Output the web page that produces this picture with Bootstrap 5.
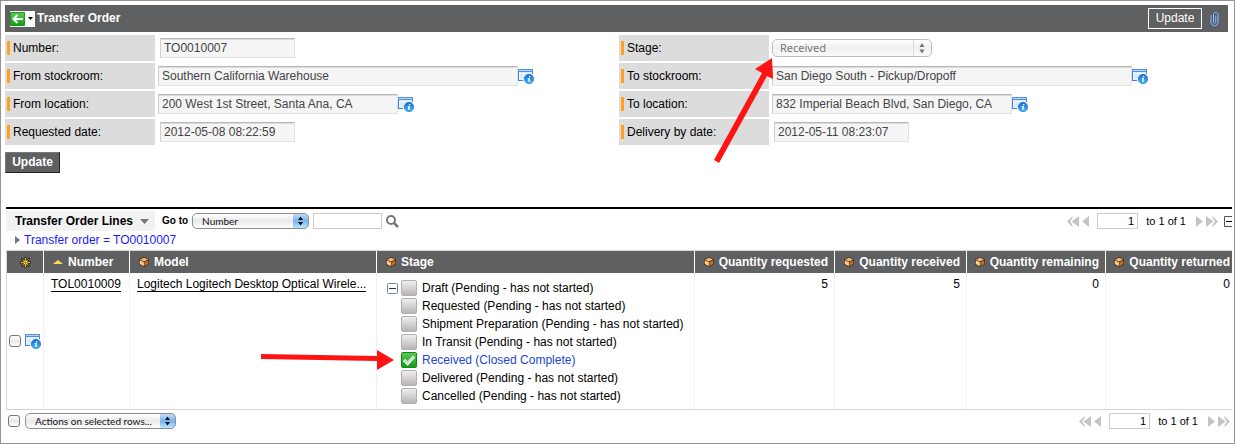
<!DOCTYPE html>
<html lang="en">
<head>
<meta charset="utf-8">
<meta name="viewport" content="width=device-width, initial-scale=1">
<title>Transfer Order</title>
<link href="https://cdn.jsdelivr.net/npm/bootstrap@5.3.0/dist/css/bootstrap.min.css" rel="stylesheet">
<style>
  body { font-family: "Liberation Sans", Arial, sans-serif; font-size: 12px; line-height: 16px; color: #000; background: #fff; }
  svg { display: block; flex: none; }
  input, select, button { font: inherit; border-radius: 0; }
  .page-frame { min-height: 100vh; border: 1px solid #949494; overflow: hidden; }
  .record { padding: 4px 6px 0 4px; }
  .title-bar { background: #5f6062; color: #fff; height: 27px; padding: 0 9px 0 5px; }
  .title-bar h1 { font-size: 12px; line-height: 16px; font-weight: bold; margin: 0 0 2px 2px; }
  .back-btn { background: #fff; border: 0; padding: 0; gap: 2px; height: 16px; width: 25px; }
  .outline-btn { background: transparent; color: #fff; border: 1px solid #fff; height: 21px; width: 54px; padding: 0 0 2px; }
  .solid-btn { background: #5f6062; color: #fff; font-weight: bold; border: 1px solid #77787a; border-right-color: #222; border-bottom-color: #222; width: 55px; height: 21px; padding: 0 0 1px; margin-top: 5px; }
  .fields { padding-top: 3px; }
  .field-columns { gap: 5px; }
  .field-row { height: 26px; margin-bottom: 2px; }
  .field-label { flex: 0 0 150px; height: 26px; background: #dcdcdc; padding-left: 2px; gap: 3px; }
  .field-label::before { content: ""; width: 3px; height: 14px; background: #ffa11f; }
  .text-field { height: 20px; margin-left: 3px; padding: 0 4px 0 3px; color: #444; background: #f5f5f5; border: 1px solid #e3e3e3; border-top: 1px solid #b8b8b8; border-left-color: #cfcfcf; box-shadow: inset 0 1px 0 #dcdcdc; min-width: 0; }
  .w-long { width: 360px; }
  .w-mid { width: 240px; }
  .w-short { width: 135px; margin-left: 5px; }
  .mac-select { appearance: none; border: 1px solid #8c8c8c; border-radius: 5px; font-family: Lato, sans-serif; font-size: 10px; line-height: 12px; color: #111; height: 16px; padding: 0 16px 1px 9px;
    background: url("data:image/svg+xml,%3Csvg xmlns='http://www.w3.org/2000/svg' width='15' height='14'%3E%3ClinearGradient id='g' x2='0' y2='1'%3E%3Cstop stop-color='%23c4dcf6'/%3E%3Cstop offset='.5' stop-color='%2377b3ee'/%3E%3Cstop offset='1' stop-color='%23bfe6ff'/%3E%3C/linearGradient%3E%3Cpath fill='url(%23g)' d='M0 0h15v14H0z'/%3E%3Cpath d='M5 6l2.500-3.500L10 6zM5 8l2.500 3.500L10 8z' fill='%23111'/%3E%3C/svg%3E") right center no-repeat, linear-gradient(#fff, #e9e9e9 50%, #fff); }
  .mac-select:disabled { opacity: 1; border-color: #bdbdbd; color: #777; font-family: "Noto Sans", sans-serif; font-size: 11px; line-height: 14px; height: 18px; width: 160px; padding: 0 18px 1px 7px;
    background: url("data:image/svg+xml,%3Csvg xmlns='http://www.w3.org/2000/svg' width='18' height='16'%3E%3Cpath d='M.5 0v16' stroke='%23ddd'/%3E%3Cpath d='M6.500 7L9 3l2.500 4zM6.500 9.500L9 13.500l2.500-4z' fill='%23777'/%3E%3C/svg%3E") right center no-repeat, linear-gradient(#fff, #f0f0f0 50%, #fbfbfb); }
  .select-wrap { position: relative; margin-left: 3px; }
  .pointer-arrow { position: absolute; pointer-events: none; z-index: 2; }
  .stage-pointer { right: 156px; top: 16px; }
  .item-pointer { right: calc(100% + 7px); top: -1px; }
  .related { margin: 34px 2px 0 5px; border-top: 2px solid #000; overflow: hidden; }
  .list-bar { height: 24px; padding-top: 2px; }
  .list-title { flex: 0 0 149px; height: 20px; background: #f2f2f2; border: 0; font-weight: bold; padding: 0 6px 0 9px; white-space: nowrap; color: #000; }
  .list-tools { height: 20px; }
  .goto-label { font-size: 10px; font-weight: bold; margin: 0 4px 0 7px; }
  .goto-select { width: 117px; }
  .plain-field { border: 1px solid #ccc; background: #fff; height: 16px; padding: 0 3px; font-size: 11px; line-height: 14px; min-width: 0; }
  .search-field { width: 69px; margin: 0 4px; }
  .page-field { width: 41px; text-align: right; margin: 0 8px; }
  .icon-btn { background: none; border: 0; padding: 0; }
  .pager { font-size: 11px; line-height: 14px; white-space: nowrap; }
  .page-step { margin-left: 3px; }
  .pager-end { margin-left: 10px; }
  .pager-fold { margin: 0 -3px 0 6px; }
  .crumb { color: #1a1aff; text-decoration: none; gap: 3px; padding-left: 9px; height: 16px; margin-bottom: 2px; margin-top: -1px; }
  .lines { width: 100%; table-layout: fixed; border-collapse: separate; border-spacing: 0; border: solid #d5d5d5; border-width: 1px 0 1px 1px; margin: 0; }
  .lines th { height: 22px; padding: 0 6px; background: #5f6062; color: #fff; font-weight: bold; border-right: 1px solid #fff; white-space: nowrap; vertical-align: middle; }
  .lines td { padding: 3px 6px 0 7px; border-right: 1px solid #f0f0f0; vertical-align: top; white-space: nowrap; }
  .lines th:last-child, .lines td:last-child { border-right: 0; padding-right: 2px; }
  .lines td a { color: #000; text-decoration: none; border-bottom: 1px solid #000; display: inline-block; line-height: 14px; }
  .lines .pick-cell { vertical-align: middle; padding: 0 0 0 2px; }
  .head-item { gap: 5px; }
  .head-item.lead-item { padding-left: 3px; }
  .stages { list-style: none; margin: 0; padding: 3px 0 4px 17px; }
  .stages li { position: relative; height: 18px; gap: 5px; }
  .fold-btn { position: absolute; left: -14px; top: 4px; }
  .state-box { width: 16px; height: 16px; border: 1px solid #b0b0b0; border-radius: 2px; background: linear-gradient(#efefef, #b9b5b5); flex: none; }
  .done { color: #2146d0; }
  .tick { appearance: none; width: 12px; height: 12px; margin: 0; border: 1px solid #777; border-radius: 3px; background: linear-gradient(#fff, #e8e8e8 50%, #fff); flex: none; }
  .foot-bar { padding: 3px 2px 0 2px; height: 19px; }
  .action-select { width: 151px; margin-left: 5px; }
</style>
</head>
<body>
<svg width="0" height="0" class="position-absolute" aria-hidden="true">
  <defs>
    <linearGradient id="blueBall" x2="0" y2="1"><stop stop-color="#1769d2"/><stop offset="1" stop-color="#35c0ff"/></linearGradient>
    <linearGradient id="greenTile" x2="0" y2="1"><stop stop-color="#5cc95a"/><stop offset="1" stop-color="#149c14"/></linearGradient>
    <symbol id="info" viewBox="0 0 16 16">
      <path d="M.5 2.500h14v10H.5z" fill="#f2f8ff"/><path d="M2 6h11v5H2z" fill="#d9ecfb"/>
      <path d="M.5 13V2M14.500 2v4M0 12.500H5" fill="none" stroke="#3b7fe0"/>
      <path d="M0 1h15v4H0z" fill="#5590dc"/><path d="M1 2h13v1H1z" fill="#b5d4fa"/><path d="M1 4h13v1H1z" fill="#dcecff"/>
      <circle cx="11" cy="11" r="4.700" fill="url(#blueBall)" stroke="#1b62c4" stroke-width=".6"/>
      <path d="M10.900 8h1.400v1.300h-1.400zM9.700 10h2.300l-.4 2.700h.8v.8H9.900l.5-2.700h-.8z" fill="#fff"/>
    </symbol>
    <symbol id="crate" viewBox="0 0 10 10">
      <path d="M0 2.500L5 0l5 2.200v5L5 10 0 7.500z" fill="#4a2508"/>
      <path d="M1 2.700L5 .7l4 1.800-4 2z" fill="#f0bd80"/><path d="M.7 3.300L4.900 5.200v4L.7 7.100z" fill="#fdcb92"/><path d="M5.400 5.200L9.300 3.200v3.700L5.400 9z" fill="#b8712f"/>
    </symbol>
    <symbol id="prev2" viewBox="0 0 12 11"><path d="M5.500 0L0 5.500 5.500 11V9L3 5.500 5.500 2zM12 0L4.500 5.500 12 11z" fill="#c4c4c4"/></symbol>
    <symbol id="next2" viewBox="0 0 12 11"><path d="M6.500 0L12 5.500 6.500 11V9L9 5.500 6.500 2zM0 0l7.500 5.500L0 11z" fill="#c4c4c4"/></symbol>
    <symbol id="prev1" viewBox="0 0 7 11"><path d="M7 0L0 5.500 7 11z" fill="#c4c4c4"/></symbol>
    <symbol id="next1" viewBox="0 0 7 11"><path d="M0 0l7 5.500L0 11z" fill="#c4c4c4"/></symbol>
  </defs>
</svg>

<main class="page-frame">
  <section class="record">
    <header class="title-bar d-flex align-items-center">
      <button class="back-btn d-flex align-items-center" type="button" aria-label="Back">
        <svg width="16" height="16" viewBox="0 0 16 16"><path d="M.5 1.500h14v13H.5z" fill="url(#greenTile)" stroke="#159b15"/><path d="M13 8H4M7.500 4L3.500 8l4 4" fill="none" stroke="#fff" stroke-width="2"/></svg>
        <svg width="5" height="3" viewBox="0 0 5 3"><path d="M0 0h5L2.500 3z" fill="#000"/></svg>
      </button>
      <h1>Transfer Order</h1>
      <button class="outline-btn ms-auto me-2" type="button">Update</button>
      <button class="icon-btn" type="button" aria-label="Attachments">
        <svg width="9" height="16" viewBox="0 0 9 16"><path d="M1 4v7.500c0 4.500 7 4.500 7 0V3.500c0-3-4.500-3-4.500 0V11c0 2 2.300 2 2.300 0V4.500" fill="none" stroke="#36538a" stroke-width="1.700"/><path d="M1 4v7.500c0 4.500 7 4.500 7 0V3.500c0-3-4.500-3-4.500 0V11c0 2 2.300 2 2.300 0V4.500" fill="none" stroke="#b4d0f6" stroke-width=".9"/></svg>
      </button>
    </header>

    <form class="fields">
      <div class="field-columns d-flex">
        <div class="w-50">
          <div class="field-row d-flex align-items-center"><label class="field-label d-flex align-items-center" for="number">Number:</label><input class="text-field w-short" id="number" value="TO0010007" readonly></div>
          <div class="field-row d-flex align-items-center"><label class="field-label d-flex align-items-center" for="fromStock">From stockroom:</label><input class="text-field w-long" id="fromStock" value="Southern California Warehouse" readonly><button class="icon-btn" type="button" aria-label="Stockroom details"><svg width="16" height="16"><use href="#info"/></svg></button></div>
          <div class="field-row d-flex align-items-center"><label class="field-label d-flex align-items-center" for="fromLoc">From location:</label><input class="text-field w-mid" id="fromLoc" value="200 West 1st Street, Santa Ana, CA" readonly><button class="icon-btn" type="button" aria-label="Location details"><svg width="16" height="16"><use href="#info"/></svg></button></div>
          <div class="field-row d-flex align-items-center"><label class="field-label d-flex align-items-center" for="reqDate">Requested date:</label><input class="text-field w-short" id="reqDate" value="2012-05-08 08:22:59" readonly></div>
        </div>
        <div class="w-50">
          <div class="field-row d-flex align-items-center"><label class="field-label d-flex align-items-center" for="stage">Stage:</label>
            <div class="select-wrap d-flex">
              <select class="mac-select" id="stage" disabled><option>Received</option></select>
              <svg class="pointer-arrow stage-pointer" width="62" height="110" viewBox="0 0 62 110"><path d="M58 3L41 14l7 4L0 105l5 3L53 21l6 3z" fill="#ff1414"/></svg>
            </div>
          </div>
          <div class="field-row d-flex align-items-center"><label class="field-label d-flex align-items-center" for="toStock">To stockroom:</label><input class="text-field w-long" id="toStock" value="San Diego South - Pickup/Dropoff" readonly><button class="icon-btn" type="button" aria-label="Stockroom details"><svg width="16" height="16"><use href="#info"/></svg></button></div>
          <div class="field-row d-flex align-items-center"><label class="field-label d-flex align-items-center" for="toLoc">To location:</label><input class="text-field w-mid" id="toLoc" value="832 Imperial Beach Blvd, San Diego, CA" readonly><button class="icon-btn" type="button" aria-label="Location details"><svg width="16" height="16"><use href="#info"/></svg></button></div>
          <div class="field-row d-flex align-items-center"><label class="field-label d-flex align-items-center" for="delDate">Delivery by date:</label><input class="text-field w-short" id="delDate" value="2012-05-11 08:23:07" readonly></div>
        </div>
      </div>
      <button class="solid-btn d-block" type="button">Update</button>
    </form>
  </section>

  <section class="related">
    <div class="list-bar d-flex align-items-start">
      <button class="list-title d-flex align-items-center justify-content-between" type="button">Transfer Order Lines<svg width="9" height="5" viewBox="0 0 9 5"><path d="M0 0h9L4.500 5z" fill="#777"/></svg></button>
      <div class="list-tools d-flex align-items-center flex-fill">
        <label class="goto-label" for="goto">Go to</label>
        <select class="mac-select goto-select" id="goto"><option>Number</option></select>
        <input class="plain-field search-field" type="text" aria-label="Search text">
        <button class="icon-btn" type="button" aria-label="Search"><svg width="13" height="13" viewBox="0 0 13 13"><circle cx="5" cy="5" r="4" fill="none" stroke="#777" stroke-width="2"/><path d="M8 8l4 4" stroke="#777" stroke-width="2.500"/></svg></button>
        <div class="pager d-flex align-items-center ms-auto">
          <button class="icon-btn" type="button" aria-label="First page"><svg width="12" height="11"><use href="#prev2"/></svg></button>
          <button class="icon-btn page-step" type="button" aria-label="Previous page"><svg width="7" height="11"><use href="#prev1"/></svg></button>
          <input class="plain-field page-field" value="1" aria-label="Page">to 1 of 1
          <button class="icon-btn pager-end" type="button" aria-label="Next page"><svg width="7" height="11"><use href="#next1"/></svg></button>
          <button class="icon-btn page-step" type="button" aria-label="Last page"><svg width="12" height="11"><use href="#next2"/></svg></button>
          <button class="icon-btn pager-fold" type="button" aria-label="Collapse list"><svg width="11" height="11" viewBox="0 0 11 11"><path d="M.5.5h10v10H.5z" fill="#fff" stroke="#555"/><path d="M2 5.500h7" stroke="#000"/></svg></button>
        </div>
      </div>
    </div>
    <a class="crumb d-flex align-items-center" href="#"><svg width="6" height="8" viewBox="0 0 6 8"><path d="M0 0l5 4-5 4z" fill="#5b7a8c"/></svg>Transfer order = TO0010007</a>

    <table class="lines">
      <colgroup><col style="width:37px"><col style="width:86px"><col style="width:247px"><col><col style="width:140px"><col style="width:132px"><col style="width:139px"><col style="width:126px"></colgroup>
      <thead>
        <tr>
          <th><svg class="mx-auto" width="11" height="11" viewBox="0 0 11 11"><path d="M5.500 0v11M0 5.500h11M1.500 1.500l8 8M9.500 1.500l-8 8" stroke="#2a1c00" stroke-width="1.800"/><path d="M5.500 1v9M1 5.500h9M2.500 2.500l6 6M8.500 2.500l-6 6" stroke="#ffd84d"/><circle cx="5.500" cy="5.500" r="2.500" fill="#ffe27a" stroke="#6b4c00" stroke-width=".8"/><circle cx="5.500" cy="5.500" r="1" fill="#7a4a00"/></svg></th>
          <th><div class="head-item lead-item d-flex align-items-center"><svg width="10" height="4" viewBox="0 0 10 4"><path d="M0 4l5-4 5 4z" fill="#ffd84d"/></svg>Number</div></th>
          <th><div class="head-item lead-item d-flex align-items-center"><svg width="10" height="10"><use href="#crate"/></svg>Model</div></th>
          <th><div class="head-item lead-item d-flex align-items-center"><svg width="10" height="10"><use href="#crate"/></svg>Stage</div></th>
          <th><div class="head-item d-flex align-items-center justify-content-end"><svg width="10" height="10"><use href="#crate"/></svg>Quantity requested</div></th>
          <th><div class="head-item d-flex align-items-center justify-content-end"><svg width="10" height="10"><use href="#crate"/></svg>Quantity received</div></th>
          <th><div class="head-item d-flex align-items-center justify-content-end"><svg width="10" height="10"><use href="#crate"/></svg>Quantity remaining</div></th>
          <th><div class="head-item d-flex align-items-center justify-content-end"><svg width="10" height="10"><use href="#crate"/></svg>Quantity returned</div></th>
        </tr>
      </thead>
      <tbody>
        <tr>
          <td class="pick-cell"><div class="d-flex align-items-center gap-1"><input class="tick" type="checkbox" aria-label="Select TOL0010009"><button class="icon-btn" type="button" aria-label="Line details"><svg width="16" height="16"><use href="#info"/></svg></button></div></td>
          <td><a href="#">TOL0010009</a></td>
          <td><a href="#">Logitech Logitech Desktop Optical Wirele...</a></td>
          <td>
            <ul class="stages">
              <li class="d-flex align-items-center"><button class="icon-btn fold-btn" type="button" aria-label="Collapse stages"><svg width="11" height="11" viewBox="0 0 11 11"><rect x=".5" y=".5" width="10" height="10" rx="1" fill="#fff" stroke="#6f8797"/><path d="M2 5.500h7" stroke="#234"/></svg></button><span class="state-box"></span>Draft (Pending - has not started)</li>
              <li class="d-flex align-items-center"><span class="state-box"></span>Requested (Pending - has not started)</li>
              <li class="d-flex align-items-center"><span class="state-box"></span>Shipment Preparation (Pending - has not started)</li>
              <li class="d-flex align-items-center"><span class="state-box"></span>In Transit (Pending - has not started)</li>
              <li class="d-flex align-items-center done"><svg class="pointer-arrow item-pointer" width="133" height="20" viewBox="0 0 133 20"><path d="M0 4v5l116 2v9l17-10L116 0v6z" fill="#ff1414"/></svg><svg width="16" height="16" viewBox="0 0 16 16"><rect x=".5" y=".5" width="15" height="15" rx="1" fill="url(#greenTile)" stroke="#128a12"/><path d="M3 8l3.500 3.500L13 4.500" fill="none" stroke="#fff" stroke-width="3"/><path d="M3.500 8.200l3 2.800 6-6.300" fill="none" stroke="#3fae3f" stroke-width=".7"/></svg>Received (Closed Complete)</li>
              <li class="d-flex align-items-center"><span class="state-box"></span>Delivered (Pending - has not started)</li>
              <li class="d-flex align-items-center"><span class="state-box"></span>Cancelled (Pending - has not started)</li>
            </ul>
          </td>
          <td class="text-end">5</td>
          <td class="text-end">5</td>
          <td class="text-end">0</td>
          <td class="text-end">0</td>
        </tr>
      </tbody>
    </table>

    <div class="foot-bar d-flex align-items-center">
      <input class="tick" type="checkbox" aria-label="Select all rows">
      <select class="mac-select action-select" aria-label="Actions"><option>Actions on selected rows...</option></select>
      <div class="pager d-flex align-items-center ms-auto">
        <button class="icon-btn" type="button" aria-label="First page"><svg width="12" height="11"><use href="#prev2"/></svg></button>
        <button class="icon-btn page-step" type="button" aria-label="Previous page"><svg width="7" height="11"><use href="#prev1"/></svg></button>
        <input class="plain-field page-field" value="1" aria-label="Page">to 1 of 1
        <button class="icon-btn pager-end" type="button" aria-label="Next page"><svg width="7" height="11"><use href="#next1"/></svg></button>
        <button class="icon-btn page-step" type="button" aria-label="Last page"><svg width="12" height="11"><use href="#next2"/></svg></button>
      </div>
    </div>
  </section>
</main>
<script src="https://cdn.jsdelivr.net/npm/bootstrap@5.3.0/dist/js/bootstrap.bundle.min.js"></script>
</body>
</html>
